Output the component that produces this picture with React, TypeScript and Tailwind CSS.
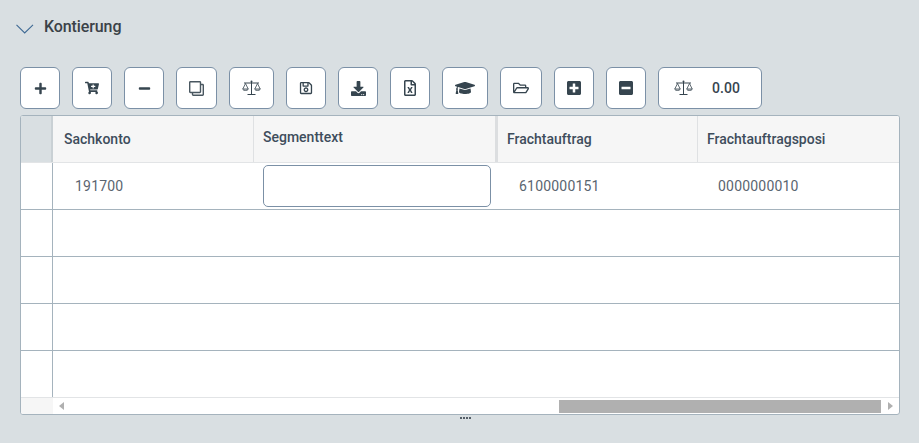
import React from "react";
import { FaPlus, FaCartPlus, FaMinus, FaRegClone, FaRegSave, FaDownload, FaRegFileExcel, FaGraduationCap, FaRegFolderOpen, FaPlusSquare, FaMinusSquare } from "react-icons/fa";

function Scale() {
  return (
    <svg width="19" height="16" viewBox="0 0 19 16" fill="none" stroke="#36454f" strokeWidth="1">
      <path d="M9.5 1v13M5.5 14.5h8M2 3h15" />
      <circle cx="9.5" cy="1.6" r="1" fill="#36454f" stroke="none" />
      <path d="M3.5 3.5 0.8 9h5.4zM15.5 3.5 12.8 9h5.4z" strokeWidth="0.8" />
      <path d="M0.6 9.2c.6 1.5 5 1.5 5.8 0M12.6 9.2c.6 1.5 5 1.5 5.8 0" strokeWidth="1" />
    </svg>
  );
}

function Btn({ w, children }: { w: string; children: React.ReactNode }) {
  return (
    <button className={`${w} h-[42px] shrink-0 flex items-center justify-center bg-white border border-[#7b90a6] rounded-[6px] text-[#36454f]`}>
      {children}
    </button>
  );
}

const rowClass = "flex h-[47px] border-b border-[#a5b3bd]";
const stub = "w-[32px] shrink-0 border-r border-[#a5b3bd]";

export default function App() {
  return (
    <div className="w-[919px] h-[443px] bg-[#d9dfe2] overflow-hidden relative" style={{ fontFamily: "Roboto, sans-serif" }}>
      <div className="h-[67px] flex items-start pl-[16px] pt-[16px]">
        <svg width="18" height="10" viewBox="0 0 18 10" fill="none" stroke="#3f6a94" strokeWidth="1.1" className="mt-[8px]">
          <path d="M0.5 0.8 8.7 9 17 0.8" />
        </svg>
        <span className="ml-[10px] text-[16px] leading-[22px] font-medium text-[#3b4248] tracking-[-0.1px]">Kontierung</span>
      </div>

      <div className="flex gap-[12px] pl-[20px] h-[42px]">
        <Btn w="w-[40px]"><FaPlus size={13} /></Btn>
        <Btn w="w-[40px]"><FaCartPlus size={14} /></Btn>
        <Btn w="w-[40px]"><FaMinus size={13} /></Btn>
        <Btn w="w-[41px]"><FaRegClone size={15} className="-scale-x-100 opacity-90" /></Btn>
        <Btn w="w-[45px]"><Scale /></Btn>
        <Btn w="w-[40px]"><FaRegSave size={14} /></Btn>
        <Btn w="w-[40px]"><FaDownload size={15} /></Btn>
        <Btn w="w-[40px]"><FaRegFileExcel size={16} /></Btn>
        <Btn w="w-[46px]"><FaGraduationCap size={20} /></Btn>
        <Btn w="w-[42px]"><FaRegFolderOpen size={16} /></Btn>
        <Btn w="w-[40px]"><FaPlusSquare size={16} /></Btn>
        <Btn w="w-[40px]"><FaMinusSquare size={16} /></Btn>
        <Btn w="w-[104px]">
          <span className="flex items-center gap-[19px] pr-[6px]">
            <Scale />
            <span className="text-[14px] font-medium text-[#36454f]">0.00</span>
          </span>
        </Btn>
      </div>

      <div className="ml-[20px] mt-[6px] w-[880px] h-[300px] flex flex-col bg-white border border-[#a5b3bd] rounded-[3px] overflow-hidden">
        <div className="flex h-[47px] bg-[#f6f6f6] border-b border-[#e2e4e6] text-[14px] font-medium text-[#3e4d5c]">
          <div className="w-[32px] shrink-0 bg-[#d9dfe2] border-r-2 border-[#c9d0d4]"></div>
          <div className="w-[201px] shrink-0 pl-[11px] flex items-center border-r border-[#dfe1e3]">Sachkonto</div>
          <div className="w-[244px] shrink-0 pl-[9px] pb-[3px] flex items-center border-r-[3px] border-[#dcdee0]">Segmenttext</div>
          <div className="w-[200px] shrink-0 pl-[9px] flex items-center border-r border-[#dfe1e3]">Frachtauftrag</div>
          <div className="flex-1 pl-[9px] flex items-center whitespace-nowrap">Frachtauftragsposi</div>
        </div>

        <div className={rowClass}>
          <div className={stub}></div>
          <div className="w-[201px] shrink-0 pl-[22px] flex items-center text-[14px] text-[#5a6570] tracking-[0.2px]">191700</div>
          <div className="w-[244px] shrink-0 pl-[9px] pt-[2px]">
            <input className="block w-[228px] h-[42px] bg-white border border-[#7b90a6] rounded-[5px]" readOnly />
          </div>
          <div className="w-[200px] shrink-0 pl-[21px] flex items-center text-[14px] text-[#5a6570] tracking-[0.2px]">6100000151</div>
          <div className="flex-1 pl-[20px] flex items-center text-[14px] text-[#5a6570] tracking-[0.2px]">0000000010</div>
        </div>
        <div className={rowClass}><div className={stub}></div></div>
        <div className={rowClass}><div className={stub}></div></div>
        <div className={rowClass}><div className={stub}></div></div>
        <div className="flex h-[47px]"><div className={`${stub} border-b`}></div></div>

        <div className="flex-1 flex border-t border-[#e2e4e6] -mt-px">
          <div className="w-[32px] shrink-0 bg-[#f6f6f6]"></div>
          <div className="flex-1 flex items-center pl-[6px] pr-[6px]">
            <svg width="6" height="8" viewBox="0 0 6 8" fill="#b0b0b0"><path d="M5 0v8L0 4z" /></svg>
            <div className="flex-1 flex justify-end pr-[6px] pl-[0px]">
              <div className="w-[322px] h-[13px] bg-[#b0b0b0]"></div>
            </div>
            <svg width="6" height="8" viewBox="0 0 6 8" fill="#b0b0b0"><path d="M1 0v8l5-4z" /></svg>
          </div>
        </div>
      </div>

      <div className="absolute left-[460px] top-[417px] flex gap-[1px]">
        <span className="w-[2px] h-[2px] bg-[#555f68]"></span>
        <span className="w-[2px] h-[2px] bg-[#555f68]"></span>
        <span className="w-[2px] h-[2px] bg-[#555f68]"></span>
        <span className="w-[2px] h-[2px] bg-[#555f68]"></span>
      </div>
    </div>
  );
}
